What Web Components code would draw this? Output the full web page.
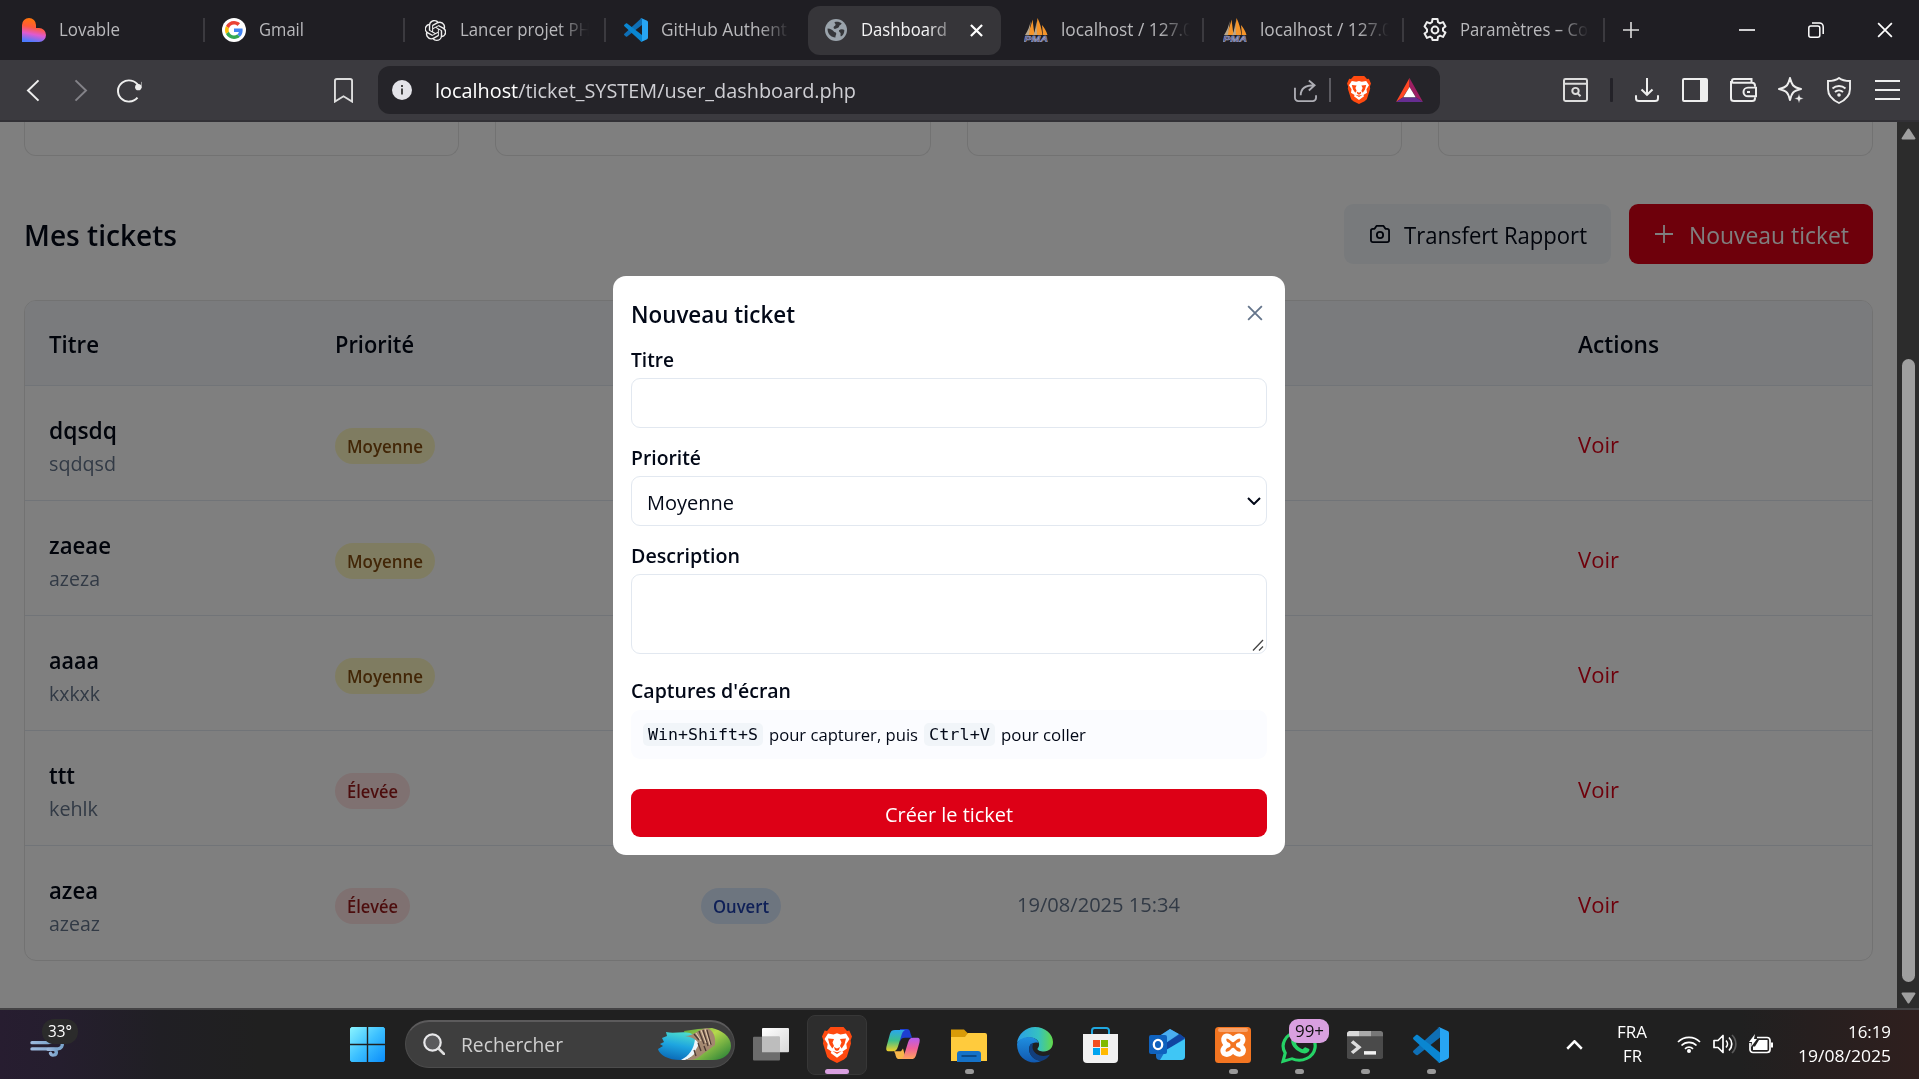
<!DOCTYPE html>
<html lang="fr">
<head>
<meta charset="utf-8">
<title>Dashboard</title>
<style>
html,body{margin:0;height:100%;overflow:hidden;background:#202020}
body{font-family:"Open Sans","Noto Sans",sans-serif}
</style>
</head>
<body>
<desktop-screen></desktop-screen>
<script>
const ICONS = {
lovable:['0 0 24 24','<defs><linearGradient id="g" x1=".6" y1="0" x2=".4" y2="1"><stop offset="0" stop-color="#ff7a00"/><stop offset=".4" stop-color="#ff5a3c"/><stop offset=".68" stop-color="#e05ad0"/><stop offset="1" stop-color="#4a7bff"/></linearGradient></defs><path fill="url(#g)" d="M0 7a7 7 0 0 1 14 0v3h3a7 7 0 0 1 0 14H0z"/>'],
google:['0 0 24 24','<circle cx="12" cy="12" r="12" fill="#fff"/><g transform="translate(3,3) scale(.375)"><path fill="#EA4335" d="M24 9.500c3.540 0 6.710 1.220 9.210 3.600l6.850-6.850C35.900 2.380 30.470 0 24 0 14.620 0 6.510 5.380 2.560 13.220l7.980 6.190C12.430 13.720 17.740 9.500 24 9.500z"/><path fill="#4285F4" d="M46.980 24.550c0-1.570-.150-3.090-.380-4.550H24v9.020h12.940c-.580 2.960-2.260 5.480-4.780 7.180l7.730 6c4.510-4.180 7.090-10.360 7.090-17.650z"/><path fill="#FBBC05" d="M10.530 28.590c-.480-1.450-.760-2.990-.760-4.590s.270-3.140.760-4.590l-7.980-6.190C.920 16.460 0 20.120 0 24c0 3.880.920 7.540 2.560 10.780z"/><path fill="#34A853" d="M24 48c6.480 0 11.930-2.130 15.890-5.810l-7.730-6c-2.150 1.450-4.920 2.300-8.160 2.300-6.260 0-11.570-4.220-13.470-9.910l-7.980 6.190C6.510 42.620 14.620 48 24 48z"/></g>'],
gpt:['0.5 0 23 24','<path fill="#eee" d="M22.2819 9.8211a5.9847 5.9847 0 0 0-.5157-4.9108 6.0462 6.0462 0 0 0-6.5098-2.9A6.0651 6.0651 0 0 0 4.9807 4.1818a5.9847 5.9847 0 0 0-3.9977 2.9 6.0462 6.0462 0 0 0 .7427 7.0966 5.98 5.98 0 0 0 .511 4.9107 6.051 6.051 0 0 0 6.5146 2.9001A5.9847 5.9847 0 0 0 13.2599 24a6.0557 6.0557 0 0 0 5.7718-4.2058 5.9894 5.9894 0 0 0 3.9977-2.9001 6.0557 6.0557 0 0 0-.7475-7.0729zm-9.022 12.6081a4.4755 4.4755 0 0 1-2.8764-1.0408l.1419-.0804 4.7783-2.7582a.7948.7948 0 0 0 .3927-.6813v-6.7369l2.02 1.1686a.071.071 0 0 1 .038.052v5.5826a4.504 4.504 0 0 1-4.4945 4.4944zm-9.6607-4.1254a4.4708 4.4708 0 0 1-.5346-3.0137l.142.0852 4.783 2.7582a.7712.7712 0 0 0 .7806 0l5.8428-3.3685v2.3324a.0804.0804 0 0 1-.0332.0615L9.74 19.9502a4.4992 4.4992 0 0 1-6.1408-1.6464zM2.3408 7.8956a4.485 4.485 0 0 1 2.3655-1.9728V11.6a.7664.7664 0 0 0 .3879.6765l5.8144 3.3543-2.0201 1.1685a.0757.0757 0 0 1-.071 0l-4.8303-2.7865A4.504 4.504 0 0 1 2.3408 7.872zm16.5963 3.8558L13.1038 8.364 15.1192 7.2a.0757.0757 0 0 1 .071 0l4.8303 2.7913a4.4944 4.4944 0 0 1-.6765 8.1042v-5.6772a.79.79 0 0 0-.407-.667zm2.0107-3.0231l-.142-.0852-4.7735-2.7818a.7759.7759 0 0 0-.7854 0L9.409 9.2297V6.8974a.0662.0662 0 0 1 .0284-.0615l4.8303-2.7866a4.4992 4.4992 0 0 1 6.6802 4.66zM8.3065 12.863l-2.02-1.1638a.0804.0804 0 0 1-.038-.0567V6.0742a4.4992 4.4992 0 0 1 7.3757-3.4537l-.142.0805L8.704 5.459a.7948.7948 0 0 0-.3927.6813zm1.0976-2.3654l2.602-1.4998 2.6069 1.4998v2.9994l-2.5974 1.4997-2.6067-1.4997Z"/>'],
vscode:['0 0 36 36','<path fill="#0f6fb5" d="M.6 23.600a1.500 1.500 0 0 0 0 2.200l2.200 2c.6.500 1.400.6 2 .1L27 10.500V0L25.500.7z"/><path fill="#0a86d1" d="M.6 12.400a1.500 1.500 0 0 1 0-2.200l2.200-2c.6-.5 1.400-.6 2-.1L27 25.500V36l-1.500-.7z"/><path fill="#27a5f3" d="M26.500 35.800c-.8.400-1.800.1-2.400-.5.8.8 2.900.2 2.900-.9V1.600c0-1.100-2.100-1.700-2.900-.9.6-.6 1.600-.9 2.400-.5l8.200 3.900c.8.400 1.300 1.200 1.300 2.100v23.600c0 .9-.5 1.700-1.300 2.100z"/>'],
globe:['0 0 22 22','<circle cx="11" cy="11" r="11" fill="#9aa3ab"/><path fill="#35363a" d="M2.600 9.500c3 .2 4.800 1.300 6 2.700 1 1.200 2.200.7 2.600 2 .3 1.300-.8 2-.8 4.200C6.500 18.500 3 15.500 2.600 11zM9.500 3.200C12 2.300 15 3 16.700 4.400c-.5 1.300-2.500 1.400-2.600 3-.1 1.500-2 1.200-3 2.200-1.300 1-2.600.1-2.500-1.300.2-1.500 2-1.300 2-2.600 0-1-1.100-1.300-1.100-2.500zM14 11.200c1.500-1.200 3.800-1.200 5.300-.3.200 3-1.200 5.200-3.400 6.600-.9-1.400.2-2.800-.6-3.800-.6-.8-1.700-1.300-1.300-2.500z"/>'],
pma:['0 0 24 24','<path fill="#f5952a" d="M3 17C6 11 7.500 6 8.500 1.500l2 15.500zM10 17c2-6 3-11 3.500-17 2.500 5 4 10 5 17zM18 7c2.500 3 4.500 6 5.500 10h-4.500z"/><path fill="#b9a78c" d="M1 17C4 13 5.500 8 6.800 3L5 17zM9.500 17c1.500-4 2.500-9 3-14l.5 14z"/><text x="0" y="24" font-family="Liberation Sans" font-size="9.500" font-weight="700" font-style="italic" textLength="24" lengthAdjust="spacingAndGlyphs" fill="#39407f" stroke="#b4b7d3" stroke-width=".5">PMA</text>'],
gear:['0 0 24 24','<g fill="none" stroke="#eee" stroke-width="2" stroke-linejoin="round"><path d="M9.500 1h5l.5 3.200 2 1.200 3-1.300 2.500 4.300-2.500 1.900v2.400l2.500 1.900-2.500 4.300-3-1.300-2 1.200-.5 3.200h-5L9 19.800l-2-1.200-3 1.300-2.500-4.300L4 13.700v-2.400L1.500 8.400 4 4.100l3 1.300 2-1.200z"/><circle cx="12" cy="12" r="3.400"/></g>'],
x:['0 0 14 14','<path d="M1 1l12 12M13 1L1 13" stroke="currentColor" stroke-width="var(--sw,2)" fill="none"/>'],
plus:['0 0 18 18','<path d="M9 0v18M0 9h18" stroke="currentColor" stroke-width="var(--sw,1.8)"/>'],
min:['0 0 16 16','<path d="M0 8h16" stroke="#fff" stroke-width="1.600"/>'],
restore:['0 0 16 16','<g fill="none" stroke="#fff" stroke-width="1.500"><rect x=".8" y="4" width="11" height="11.200" rx="2"/><path d="M4 1h7.500A3.700 3.700 0 0 1 15.200 4.700V12"/></g>'],
back:['0 0 14 24','<path d="M12.500 1.500L2 12l10.500 10.500" fill="none" stroke="currentColor" stroke-width="2"/>'],
reload:['0 0 26 26','<path d="M21.500 20.500A11 11 0 1 1 22.500 8" fill="none" stroke="#eee" stroke-width="2"/><path d="M18.500 10.500h7V4a3.500 3.500 0 0 1 0 6.500z" fill="#eee"/><circle cx="22.300" cy="9.500" r="3.200" fill="#eee"/>'],
bookmark:['0 0 20 26','<path d="M1 3a2 2 0 0 1 2-2h14a2 2 0 0 1 2 2v21.500l-9-5.500-9 5.500z" fill="none" stroke="#ddd" stroke-width="2"/>'],
info:['0 0 20 20','<circle cx="10" cy="10" r="10" fill="#e3e3e8"/><path d="M10 8.500v6M10 5v2" stroke="#333" stroke-width="1.800"/>'],
share:['0 0 24 24','<path d="M1 9v10.500A3.500 3.500 0 0 0 4.500 23h15a3.500 3.500 0 0 0 3.500-3.500V17M7 17C7 10 11 6.500 21 6.500M15.500 1.500l6 5-6 5.500" fill="none" stroke="#aeaeb5" stroke-width="1.900"/>'],
brave:['0 0 30 36','<path fill="#ff4a10" d="M8.500 0h13l3.500 4 2.300-.4L30 9.500l-1.400 4 .4 3-4.200 13.500L22 32.500 15 36l-7-3.500L5.200 30 1 16.500l.4-3L0 9.500l2.700-5.900L5 4z"/><path fill="#fff" d="M6 6.500l5.500 1L15 6.300l3.500 1.200 5.500-1 3.500 5.500-3.200 5 .7 4.500-4.500 3 .8 1.500-6.300 4.800L8.700 26l.8-1.500-4.500-3 .7-4.500-3.200-5z"/><path fill="#ff4a10" d="M6 11.500l6 .6-1.500 3.400L12 19l-1.700 2.500-2.800-4.200zM24 11.500l-6 .6 1.500 3.400L18 19l1.700 2.500 2.800-4.200zM12 20l3 1.500 3-1.500-1 3-2 1-2-1zM10.500 24l4.500 1.200 4.500-1.200-4.500 3z"/>'],
bat:['0 0 26 24','<path fill="#ff4724" d="M13 0v9L6.500 19.500 0 24z"/><path fill="#9e1f63" d="M13 0v9l6.500 10.500L26 24z"/><path fill="#662d91" d="M0 24l6.500-4.500h13L26 24z"/><path fill="#fff" d="M13 9l6 10.300H7z"/>'],
findpage:['0 0 25 25','<g fill="none" stroke="#ddd" stroke-width="2"><rect x="1" y="1" width="23" height="23" rx="1.500"/><path d="M1 6h23M17.500 19l-3-3.200"/><circle cx="12.500" cy="13.500" r="3.200"/></g>'],
download:['0 0 24 25','<path d="M12 0v17M6.500 12l5.500 5.500 5.500-5.500M1 18v3a3 3 0 0 0 3 3h16a3 3 0 0 0 3-3v-3" fill="none" stroke="#eee" stroke-width="2"/>'],
sidebar:['0 0 26 25','<rect x="1" y="1" width="24" height="23" rx="1" fill="none" stroke="#eee" stroke-width="2"/><path d="M18 1h7v23h-7z" fill="#eee"/>'],
wallet:['0 0 27 25','<g fill="none" stroke="#eee" stroke-width="2"><path d="M25 9V8a3 3 0 0 0-3-3H4a2 2 0 0 1 0-4h17.500v4M1 3v18a3 3 0 0 0 3 3h18a3 3 0 0 0 3-3v-1"/><path d="M26 10h-8a4.500 4.500 0 0 0 0 9h8zM17 14.500h3"/></g>'],
sparkle:['0 0 26 26','<path d="M12 1c1.500 5 1.500 9 11 11-9.500 2-9.500 6-11 11-1.500-5-1.500-9-11-11C10.500 10 10.500 6 12 1z" fill="none" stroke="#eee" stroke-width="2" stroke-linejoin="round"/><path d="M21 16.500l1.300 3.700 3.700 1.300-3.700 1.300L21 26.500l-1.300-3.700-3.700-1.300 3.700-1.300z" fill="#eee" stroke="#3b3a3f" stroke-width=".6"/>'],
vpn:['0 0 24 27','<g fill="none" stroke="#eee" stroke-width="1.900"><path d="M12 1c3 2.300 7 3 11 3v8c0 7-4.500 11-11 14C5.500 23 1 19 1 12V4c4 0 8-.7 11-3z"/><path d="M5.500 11.500a9.500 9.500 0 0 1 13 0M8 15a6 6 0 0 1 8 0"/></g><circle cx="12" cy="18" r="1.800" fill="#eee"/>'],
menu:['0 0 25 22','<path d="M0 2h25M0 11h25M0 20h25" stroke="#eee" stroke-width="2"/>'],
camera:['0 0 21 19','<path d="M6.800 1h7.400l2 3H18a2 2 0 0 1 2 2v10a2 2 0 0 1-2 2H3a2 2 0 0 1-2-2V6a2 2 0 0 1 2-2h1.800z" fill="none" stroke="#020817" stroke-width="1.900" stroke-linejoin="round"/><circle cx="10.500" cy="10.500" r="3.300" fill="none" stroke="#020817" stroke-width="1.900"/>'],
chev:['0 0 14 8','<path d="M1 1l6 6 6-6" fill="none" stroke="currentColor" stroke-width="2"/>'],
grip:['0 0 12 12','<path d="M1 11.500L11 1M7 11.500L11 7.500" stroke="#444" stroke-width="1.300"/>'],
tri:['0 0 14 12','<path d="M7 1.500L12.500 10.500h-11z" fill="#9f9f9f" stroke="#9f9f9f" stroke-width="2" stroke-linejoin="round"/>'],
wind:['0 0 36 22','<defs><linearGradient id="w" x2="1"><stop stop-color="#9db8dc"/><stop offset="1" stop-color="#7ba5cc"/></linearGradient></defs><g fill="none" stroke="url(#w)" stroke-width="3.400" stroke-linecap="round"><path d="M2 7h16c4 0 5-4 2-6"/><path d="M2 13.500h26a4.500 4.500 0 1 0-3-8"/><path d="M18 14h5.500a3 3 0 1 1-3 4"/></g>'],
win:['0 0 35 35','<defs><linearGradient id="v" x2="1" y2="1"><stop stop-color="#8af4ff"/><stop offset=".5" stop-color="#3cc0ff"/><stop offset="1" stop-color="#0a8cfa"/></linearGradient></defs><path fill="url(#v)" d="M1.500 0H16.800v16.800H0V1.500zM18.200 0h15.300L35 1.500v15.300H18.200zM0 18.200h16.800V35H1.500L0 33.500zM18.200 18.200H35v15.300L33.500 35H18.200z"/>'],
search:['0 0 22 22','<circle cx="9.500" cy="9.500" r="8.200" fill="#5a5a5c" stroke="#e8e8ea" stroke-width="2.200"/><path d="M15.500 15.500l5.500 5.500" stroke="#ddd" stroke-width="2.600" stroke-linecap="round"/>'],
bay:['0 0 73 34','<defs><linearGradient id="b" x1=".7" y1="0" x2=".4" y2="1"><stop stop-color="#4fe0cc"/><stop offset=".5" stop-color="#1ea5e0"/><stop offset="1" stop-color="#0b6bb8"/></linearGradient><linearGradient id="c" x2="1" y2="1"><stop stop-color="#57a53a"/><stop offset=".4" stop-color="#b6d84c"/><stop offset="1" stop-color="#1c7a35"/></linearGradient></defs><path fill="url(#c)" d="M26 4l14-2 14-1c9 2 19 8 19 18 0 8-8 14-18 14H34z"/><path fill="url(#b)" d="M9 9l-1-4c8 2 16-1 24 1l10 5c-1 9-6 18-17 22C12 34 1 28 0 22l5-3-3-2 4-2-2-4z"/><path fill="#eef6fb" d="M37 12l6 1c-1 9-7 17-16 20h-4c8-4 13-11 14-21z"/><path fill="#a48870" d="M27 9c9 0 13-7 22-8 6 2 9 8 8 17l-8 6c-5 3-9 8-15 9h-6c5-3 10-6 9-9l3-5c1-4-2-8-13-10z"/><path d="M36 7l5 6M41 4l5 13M45 3l5 16M49 3l4 15M40 16l3 8M36 23l2 6M46 19l2 5" stroke="#4d3a33" stroke-width="1.300"/><path d="M38 6l5 8M43 3l5 13M47 2l5 16" stroke="#e5cdb0" stroke-width="1"/>'],
taskview:['0 0 36 34','<defs><linearGradient id="t" x2="1" y2="1"><stop stop-color="#fff"/><stop offset="1" stop-color="#d8d8d8"/></linearGradient></defs><rect x="9" width="27" height="25" rx="1" fill="url(#t)"/><rect y="9" width="27" height="24.500" rx="1" fill="#6c6c6c"/><path fill="#bdbdbd" d="M9 9h18v16H9z"/>'],
copilot:['0 0 34 32','<defs><linearGradient id="p" x2="0" y2="1"><stop stop-color="#2aa7f0"/><stop offset=".5" stop-color="#3ebf8a"/><stop offset="1" stop-color="#f2d027"/></linearGradient><linearGradient id="q" x2="0" y2="1"><stop stop-color="#b55cf0"/><stop offset=".5" stop-color="#f0609a"/><stop offset="1" stop-color="#ffa45c"/></linearGradient></defs><path fill="#1d3fd0" d="M14 0h7c3 0 3 3 4 6l1 3h-7c-3 0-4 1-5 4z"/><path fill="url(#p)" d="M9 1h10c-2 1-3 3-4 7l-3 10c-1 3-2 5-5 5H3c-3 0-3-2-2.500-5L4 5c1-3 2-4 5-4z"/><path fill="#f7b64a" d="M8 23h7l2-3 3 11h-7c-3 0-3-3-4-6z"/><path fill="url(#q)" d="M25 31H15c2-1 3-3 4-7l3-10c1-3 2-5 5-5h4c3 0 3 2 2.500 5L30 27c-1 3-2 4-5 4z"/>'],
folder:['0 0 36 34','<path fill="#d99b08" d="M0 1.500h13l4 4H34V20H0z"/><path fill="#ffcb3d" d="M0 9h14l3-4h17a2 2 0 0 1 2 2v26H0z"/><path fill="#1572c8" d="M6 34V26a3 3 0 0 1 3-3h18a3 3 0 0 1 3 3v8z"/><path d="M10.500 28h15" stroke="#0b4a88" stroke-width="2"/>'],
edge:['0 0 36 36','<defs><linearGradient id="e" x2="1"><stop stop-color="#2a9ee8"/><stop offset=".6" stop-color="#35c1c1"/><stop offset="1" stop-color="#63d94a"/></linearGradient><linearGradient id="f" x2="0" y2="1"><stop stop-color="#1f8fe0"/><stop offset="1" stop-color="#1159b0"/></linearGradient></defs><path fill="url(#e)" d="M0 16C1 7 9 0 18 0c10 0 18 7 18 15 0 6-4 9.500-9 9.500-4 0-6.500-1.500-6.500-2.500s1.600-1.500 1.600-4.500c0-4-4-7-9-7C7 10.500 2 13 0 16z"/><path fill="url(#f)" d="M0 17c1-4 6-7 12-7 5 0 9 3 9.500 6-6-2-11 3-9 9 1.700 5.500 7 9 13 8.500C15 39 0 33 0 17z"/><path fill="#123e7c" d="M13.500 17c-4 7 1 16 10.500 17 3-.5 7-3 9-6.500-4 2-10 2-13.500-.5-4-3-5-7-3-11z"/>'],
store:['0 0 36 36','<path d="M9 8V3.500A2.500 2.500 0 0 1 11.500 1h12A2.500 2.500 0 0 1 26 3.500V8" fill="none" stroke="#20a8e0" stroke-width="2"/><path fill="#f1f1f1" d="M0 7h35v25a4 4 0 0 1-4 4H4a4 4 0 0 1-4-4z"/><path fill="#f25022" d="M10 13h7v7h-7z"/><path fill="#7fba00" d="M18 13h7v7h-7z"/><path fill="#00a4ef" d="M10 21h7v7h-7z"/><path fill="#ffb900" d="M18 21h7v7h-7z"/>'],
outlook:['0 0 36 31','<path fill="#1a6fc4" d="M7 9L21 0l15 9v18a4 4 0 0 1-4 4H11a4 4 0 0 1-4-4z"/><path fill="#4aaef0" d="M9 8l12-8 9 5-16 11z"/><path fill="#1044a0" d="M14 16L31 5l5 4-18 12z"/><path fill="#3fc6f5" d="M17 21l19-11v17a4 4 0 0 1-4 4H11z"/><rect y="6" width="18" height="19" rx="2" fill="#0f62be"/><ellipse cx="9" cy="15.500" rx="4.200" ry="4.700" fill="none" stroke="#fff" stroke-width="2.300"/>'],
xampp:['0 0 36 36','<rect width="36" height="36" rx="3.500" fill="#f37521"/><rect x="3" y="1" width="30" height="4" rx="2" fill="#f9a268"/><g fill="none" stroke="#fff" stroke-width="5" stroke-linecap="round" stroke-linejoin="round"><path d="M9 26.500c-3-4 1.500-8 4-8.500-3-.5-6-5-3-8.500 3-2 6 1 8 3 2-2 6-5 9-2.500 2.500 3.500-.5 7.500-3.500 8 3 .5 6.500 4.500 4 8-3 2.500-7 .5-9.500-2.500-2.500 3-6 5-9 3z"/></g>'],
whatsapp:['0 0 36 43','<path d="M4.200 30.500A16 16 0 1 1 11 37l-9 3z" fill="none" stroke="#25d366" stroke-width="3.200"/><path fill="#25d366" d="M11 14c2-2.500 4-1.500 4.500 0l1.200 3.500c.2 1-1.700 2-1.700 2.700 1.300 3 3.500 5 6.500 6 1-.3 2-2.200 2.800-2.200l4 2c.8 2.500-2 5-4.500 5C17 31 7.500 21 11 14z"/>'],
terminal:['0 0 36 32','<rect width="36" height="32" rx="2" fill="#4a4a4a"/><path fill="#d8d8d8" d="M2 0h10v6H0V2z"/><path fill="#aaa" d="M12 0h12v6H12z"/><path fill="#777" d="M24 0h10l2 2v4H24z"/><path d="M5 12l7 6.500L5 25" fill="none" stroke="#ddd" stroke-width="3.600"/><path d="M17 25h12" stroke="#f2f2f2" stroke-width="4"/>'],
wifi:['0 0 24 18','<g fill="none" stroke="#fff" stroke-width="1.700"><path d="M1 7a15.500 15.500 0 0 1 22 0M4.500 10.500a10.500 10.500 0 0 1 15 0M8 13.800a5.700 5.700 0 0 1 8 0"/></g><circle cx="12" cy="16" r="2" fill="#fff"/>'],
sound:['0 0 24 20','<g fill="none" stroke="#fff" stroke-width="1.700"><path d="M1 6.500h4l5-5v17l-5-5H1z" stroke-linejoin="round"/><path d="M13 6.500a5 5 0 0 1 0 7M16 3.500a9 9 0 0 1 0 13"/><path d="M19 1a12.500 12.500 0 0 1 0 18" stroke="#5a5a5a"/></g>'],
battery:['0 0 24 20','<path d="M8 3.500h10a3 3 0 0 1 3 3v9a3 3 0 0 1-3 3H4a3 3 0 0 1-3-3V9" fill="none" stroke="#fff" stroke-width="1.700"/><path fill="#fff" d="M10 6h8.500v10H4v-3.500h2zM22 8.500h2v5h-2zM6 0L0 8h3l-1 5 6-8H5z"/>']
};

/* Registers an element whose open shadow root holds the given style and markup. */
function define(name, css, html, ready) {
  customElements.define(name, class extends HTMLElement {
    connectedCallback() {
      if (this.shadowRoot) return;
      const root = this.attachShadow({mode: 'open'});
      const a = k => this.getAttribute(k) ?? '';
      root.innerHTML = `<style>:host{display:block;box-sizing:border-box}*{box-sizing:border-box}${css}</style>` +
        (typeof html === 'function' ? html(a) : html);
      ready && ready(this, root);
    }
  });
}

/* One line of text condensed or widened to an exact advance width. */
define('fit-text',
  `:host{white-space:pre;flex:none;line-height:1.4}span{display:inline-block;transform-origin:0 50%}`,
  '<span><slot></slot></span>',
  (el, root) => {
    const s = root.querySelector('span'), w = +el.getAttribute('w');
    s.style.transform = `scaleX(${w / s.getBoundingClientRect().width})`;
    el.style.width = w + 'px';
  });

define('x-icon', `:host{flex:none;line-height:0}svg{display:block}`,
  a => `<svg width="${a('w')}" height="${a('h')}" viewBox="${ICONS[a('name')][0]}" preserveAspectRatio="none">${ICONS[a('name')][1]}</svg>`);

/* ---------- browser chrome ---------- */
define('browser-tab', `
 :host{width:200.200px;height:60px;display:flex;align-items:center;padding-left:20px;font-size:18px;color:#b9b9bc;flex:none}
 .ic{width:24px;display:flex;justify-content:center;margin-right:13px}
 .t{width:134px;margin-top:-1px;margin-right:-20px}
 :host([fade]) .t{-webkit-mask-image:linear-gradient(90deg,#000 98px,transparent 129px);mask-image:linear-gradient(90deg,#000 98px,transparent 129px)}
 .sep{width:2px;height:24px;background:#3b3a3f;margin-left:auto;margin-right:var(--shift,0)}
 :host([nosep]) .sep{display:none}
 :host([active]) .box{background:#363539;border-radius:12px}
 .box{display:flex;align-items:center;flex:1;height:49px;min-width:0}
 :host([active]){padding:0 3px 0 4px;color:#f4f4f5}
 :host([active]) .box{padding-left:16px}
 :host([active]) .t{width:87px;margin-right:0;-webkit-mask-image:linear-gradient(90deg,#000 76%,#0006);mask-image:linear-gradient(90deg,#000 76%,#0006)}
 .close{display:none;color:#fff;--sw:2.400;margin-left:22px}
 :host([active]) .close{display:block}
`, a => `<div class="box"><div class="ic"><x-icon name="${a('icon')}" w="${a('iw')||24}" h="${a('iw')||24}"></x-icon></div>
 <div class="t"><fit-text w="${a('w')}">${a('label')}</fit-text></div><x-icon class="close" name="x" w="13" h="13"></x-icon></div><div class="sep"></div>`);

define('tab-strip', `
 :host{display:flex;align-items:center;height:60px;background:#1f1e23;padding-left:3px;color:#ededed}
 browser-tab:nth-child(-n+4 of browser-tab){--shift:-2px}
 .l{padding-left:19px}
 .plus{margin-left:18px;color:#ddd}
 .win{margin-left:auto;display:flex;gap:53px;padding-right:26px;--sw:1.500;color:#fff}
`, `
 <browser-tab class="l" icon="lovable" label="Lovable" w="61"></browser-tab>
 <browser-tab class="l" icon="google" label="Gmail" w="45"></browser-tab>
 <browser-tab icon="gpt" iw="21" label="Lancer projet PH" w="131" fade></browser-tab>
 <browser-tab icon="vscode" label="GitHub Authent" w="126" fade nosep></browser-tab>
 <browser-tab icon="globe" iw="22" label="Dashboard" w="86" active nosep></browser-tab>
 <browser-tab icon="pma" label="localhost / 127.0" w="132" fade></browser-tab>
 <browser-tab class="l" icon="pma" label="localhost / 127.0" w="132" fade></browser-tab>
 <browser-tab class="l" icon="gear" label="Paramètres – Co" w="128" fade></browser-tab>
 <x-icon class="plus" name="plus" w="16" h="16"></x-icon>
 <div class="win"><x-icon name="min" w="16" h="16"></x-icon><x-icon name="restore" w="16" h="16"></x-icon><x-icon name="x" w="16" h="16"></x-icon></div>`);

define('nav-bar', `
 :host{display:flex;align-items:center;height:62px;background:#3b3a3f;border-bottom:2px solid #323136;padding:0 8px 0 9px;color:#eee}
 .s{width:48px;display:flex;justify-content:center;flex:none}
 .dim{color:#838288}.dim x-icon{transform:scaleX(-1)}
 .url{display:flex;align-items:center;width:1062px;height:48px;border-radius:12px;background:#252429;margin-left:11px;padding:0 17px 0 14px;font-size:20px;color:#cfcfd4}
 .url fit-text{margin-left:23px;margin-top:1px}b{font-weight:400;color:#fff}
 .v{width:2px;height:24px;background:#5c5b61;margin:0 16px 0 12px}
 .right{display:flex;align-items:center;margin-left:auto}
 .d{width:3px;height:24px;background:#232228;margin:0 10px 0 11px;border-radius:1px}
`, `
 <div class="s"><x-icon name="back" w="14" h="23"></x-icon></div><div class="s dim"><x-icon name="back" w="14" h="23"></x-icon></div>
 <div class="s"><x-icon name="reload" w="26" h="25"></x-icon></div>
 <div class="s" style="margin-left:166px"><x-icon name="bookmark" w="19" h="25"></x-icon></div>
 <div class="url"><x-icon name="info" w="20" h="20"></x-icon><fit-text w="421"><b>localhost</b>/ticket_SYSTEM/user_dashboard.php</fit-text>
 <x-icon name="share" w="23" h="23" style="margin-left:auto"></x-icon><div class="v"></div><x-icon name="brave" w="24" h="28"></x-icon><x-icon name="bat" w="27" h="24" style="margin-left:25px"></x-icon></div>
 <div class="right"><div class="s"><x-icon name="findpage" w="25" h="24"></x-icon></div><div class="d"></div>
 ${[['download',24,24],['sidebar',26,24],['wallet',27,24],['sparkle',26,26],['vpn',24,27],['menu',25,22]].map(i=>`<div class="s"><x-icon name="${i[0]}" w="${i[1]}" h="${i[2]}"></x-icon></div>`).join('')}</div>`);

/* ---------- dashboard page ---------- */
define('status-pill', `
 :host{display:inline-flex;align-items:center;height:36px;padding:1px 12px 0;border-radius:18px;font-size:17.500px;font-weight:600}
 :host([tone=yellow]){background:#fef9c3;color:#854d0e}
 :host([tone=red]){background:#ffe2e2;color:#991b1b}
 :host([tone=blue]){background:#dbeafe;color:#1e40af}
`, '<slot></slot>');

define('ticket-row', `
 :host{display:grid;grid-template-columns:286px 366px 316px 561px 1fr;align-items:center;height:115px;padding-left:24px;border-bottom:1px solid #e2e8f0;font-size:22.500px;color:#020817}
 :host([last]){height:114px;border:0}
 .n{padding-top:7px}.n fit-text{line-height:33px}
 .name{font-weight:600}.sub{font-size:20px;color:#64748b}
 .p{padding-top:6px;line-height:0;display:flex}.date{font-size:20px;color:#64748b;padding-top:4px}
 .v{color:#dd0016;padding-top:3px}
`, a => {
  const hi = a('prio') === 'Élevée';
  return `<div class="n"><fit-text class="name" w="${a('nw')}">${a('name')}</fit-text><fit-text class="sub" w="${a('sw')}">${a('sub')}</fit-text></div>
  <div class="p"><status-pill tone="${hi?'red':'yellow'}"><fit-text w="${hi?51:76}">${a('prio')}</fit-text></status-pill></div>
  <div class="p">${a('status')?`<status-pill tone="blue"><fit-text w="56">${a('status')}</fit-text></status-pill>`:''}</div>
  <div class="date">${a('date')?`<fit-text w="163">${a('date')}</fit-text>`:''}</div>
  <div class="v"><fit-text w="41">Voir</fit-text></div>`; });

define('ticket-table', `
 :host{border:1px solid #e5e5e5;border-radius:12px;overflow:hidden;background:#fff}
 .h{display:grid;grid-template-columns:286px 366px 316px 561px 1fr;align-items:center;height:85px;padding-left:24px;background:#f4f7fb;border-bottom:1px solid #e2e8f0;font-size:22.500px;font-weight:600;color:#020817}
 .h fit-text{padding-top:4px}
`, `<div class="h"><fit-text w="50">Titre</fit-text><fit-text w="79">Priorité</fit-text><span></span><span></span><fit-text w="81">Actions</fit-text></div><slot></slot>`);

define('action-button', `
 :host{display:flex;align-items:center;height:60px;border-radius:9px;padding:0 24px 0 26px;font-size:24px;background:#f1f5f9;color:#020817}
 :host([primary]){background:#dd0016;color:#fff}
`, `<slot name="icon"></slot><slot></slot>`);

define('stat-card', `:host{height:34px;flex:1;border:1px solid #e5e5e5;border-top:0;border-radius:0 0 12px 12px}`, '');

define('form-field', `
 :host{display:flex;flex-direction:column;font-size:20.500px;font-weight:600;color:#020817}
 .l{height:28px;margin-bottom:5px}.l fit-text{line-height:28px}
 .b{height:50px;border:1px solid #e2e8f0;border-radius:9px;display:flex;align-items:center;justify-content:space-between;padding:0 5px 0 15px;font-weight:400}
 :host([area]) .b{height:80px;align-items:flex-end;justify-content:flex-end;padding:0 2px 2px}
`, a => `<div class="l"><fit-text w="${a('w')}">${a('label')}</fit-text></div><div class="b"><slot></slot></div>`);

define('ticket-dialog', `
 :host{width:672px;height:579px;border-radius:13px;background:#fff;padding:18px;color:#020817;display:flex;flex-direction:column}
 .top{display:flex;justify-content:space-between;align-items:center;height:39px;font-size:24px;font-weight:600;padding-right:4px}
 .top x-icon{color:#64748b;--sw:1.600;margin-top:-2px}
 .f{margin-top:15px}
 .cap{font-size:20.500px;font-weight:600;margin-top:22px;height:28px}.cap fit-text{line-height:28px}
 .hint{height:49px;background:#fbfcff;border-radius:9px;margin-top:6px;display:flex;align-items:center;padding-left:12px;font-size:17px}
 kbd{font:16.500px "DejaVu Sans Mono",monospace;background:#f1f5f9;border-radius:5px;padding:0 5px;height:23px;display:flex;align-items:center;margin:0 6px 0 0}
 kbd+fit-text+kbd{margin-left:6px}
 .go{height:48px;background:#dd0016;border-radius:9px;color:#fff;display:flex;align-items:center;justify-content:center;font-size:20.500px;font-weight:500;margin-top:30px}
 .go fit-text{padding-top:3px}
`, `
 <div class="top"><fit-text w="164">Nouveau ticket</fit-text><x-icon name="x" w="16" h="16"></x-icon></div>
 <form-field style="margin-top:12px" label="Titre" w="43"></form-field>
 <form-field class="f" label="Priorité" w="70"><fit-text w="87" style="padding-top:2px">Moyenne</fit-text><x-icon name="chev" w="14" h="8"></x-icon></form-field>
 <form-field class="f" area label="Description" w="109"><x-icon name="grip" w="12" h="12"></x-icon></form-field>
 <div class="cap"><fit-text w="160">Captures d'écran</fit-text></div>
 <div class="hint"><kbd><fit-text w="110">Win+Shift+S</fit-text></kbd><fit-text w="149">pour capturer, puis</fit-text><kbd><fit-text w="61">Ctrl+V</fit-text></kbd><fit-text w="85">pour coller</fit-text></div>
 <div class="go"><fit-text w="128">Créer le ticket</fit-text></div>`);

define('page-scrollbar', `
 :host{width:22px;background:#2c2c2c;display:flex;flex-direction:column;align-items:center;padding:6px 0 4px}
 .th{width:13px;height:623px;border-radius:7px;background:#9f9f9f;margin-top:219px}
 .dn{margin-top:auto;transform:scaleY(-1)}
`, `<x-icon name="tri" w="15" h="12"></x-icon><div class="th"></div><x-icon class="dn" name="tri" w="15" h="12"></x-icon>`);

define('dashboard-page', `
 :host{display:flex;height:886px;background:#fff}
 .main{flex:1;position:relative;padding:0 24px}
 .stats{display:flex;gap:36px}
 .head{display:flex;align-items:center;margin:48px 0 36px;gap:18px;height:60px;font-size:29px;font-weight:600;color:#020817}
 .head>fit-text{margin-right:auto;padding-top:2px}
 action-button{font-weight:400}action-button fit-text{padding-top:2px}
 .veil{position:absolute;inset:0;background:rgba(0,0,0,.5);display:flex;align-items:center;justify-content:center;padding-top:1px}
`, `<div class="main"><div class="stats"><stat-card></stat-card><stat-card></stat-card><stat-card></stat-card><stat-card></stat-card></div>
 <div class="head"><fit-text w="153">Mes tickets</fit-text>
 <action-button><x-icon slot="icon" name="camera" w="20" h="18"></x-icon><fit-text w="183" style="margin-left:14px">Transfert Rapport</fit-text></action-button>
 <action-button primary><x-icon slot="icon" name="plus" w="18" h="18"></x-icon><fit-text w="160" style="margin-left:16px">Nouveau ticket</fit-text></action-button></div>
 <ticket-table>
 <ticket-row name="dqsdq" nw="68" sub="sqdqsd" sw="67" prio="Moyenne"></ticket-row>
 <ticket-row name="zaeae" nw="62" sub="azeza" sw="51" prio="Moyenne"></ticket-row>
 <ticket-row name="aaaa" nw="50" sub="kxkxk" sw="51" prio="Moyenne"></ticket-row>
 <ticket-row name="ttt" nw="26" sub="kehlk" sw="49" prio="Élevée"></ticket-row>
 <ticket-row name="azea" nw="49" sub="azeaz" sw="51" prio="Élevée" status="Ouvert" date="19/08/2025 15:34" last></ticket-row>
 </ticket-table>
 <div class="veil"><ticket-dialog></ticket-dialog></div></div><page-scrollbar></page-scrollbar>`);

/* ---------- taskbar ---------- */
define('task-item', `
 :host{width:66px;height:60px;display:flex;align-items:center;justify-content:center;position:relative;flex:none}
 :host([active]) .bg{position:absolute;inset:0 3px;border-radius:8px;background:#2d2d2d;border:1px solid #373737}
 x-icon{position:relative}
 .dot{position:absolute;bottom:1px;height:5px;width:9px;left:28.500px;border-radius:3px;background:#999;display:none}
 :host([run]) .dot{display:block}
 :host([active]) .dot{width:24px;left:21px;background:#d9a0e0}
 .badge{position:absolute;left:23px;top:4px;width:40px;height:24px;border-radius:9px;background:#d9a0e0;color:#111;font-size:17px;display:flex;align-items:center;justify-content:center}
`, a => `<div class="bg"></div><x-icon name="${a('icon')}" w="${a('w')}" h="${a('h')}"></x-icon><div class="dot"></div>${a('badge')?`<div class="badge"><fit-text w="29">${a('badge')}</fit-text></div>`:''}`);

define('task-bar', `
 :host{height:71px;border-top:2px solid #444345;background:linear-gradient(90deg,#271d30 0,#251e2e 60px,#201f24 160px,#202020 260px,#202020 1740px,#261f1f 1810px,#2f1f1e 1919px);display:flex;align-items:center;padding:0 28px 0 29px;color:#fff;font-size:17px}
 .wx{width:50px;height:42px;position:relative;margin-top:-10px;display:flex;align-items:flex-end;padding:0 0 4px 1px}
 .deg{position:absolute;left:13px;top:0;width:36px;height:25px;border-radius:12px;background:#2b2b2b;display:flex;justify-content:center;align-items:center}
 .mid{display:flex;align-items:center;margin-left:271px}
 .se{width:330px;height:48px;border-radius:24px;background:#3e3e3e;border:1px solid #4c4c4c;border-top:2px solid #5c5b5c;display:flex;align-items:center;padding:0 3px 0 17px;margin:-2px 3px 0 20px;font-size:20.500px;color:#cfcfcf}
 .se fit-text{margin-left:16px}
 .tray{display:flex;align-items:center;margin-left:auto}
 .c{display:flex;flex-direction:column;align-items:center}.c fit-text{line-height:24px}
`, `
 <div class="wx"><x-icon name="wind" w="36" h="21"></x-icon><div class="deg"><fit-text w="24">33°</fit-text></div></div>
 <div class="mid"><x-icon name="win" w="35" h="35"></x-icon>
 <div class="se"><x-icon name="search" w="22" h="22"></x-icon><fit-text w="102">Rechercher</fit-text><x-icon name="bay" w="73" h="34" style="margin-left:auto"></x-icon></div>
 <task-item icon="taskview" w="36" h="33"></task-item><task-item icon="brave" w="30" h="36" run active></task-item>
 <task-item icon="copilot" w="34" h="31"></task-item><task-item icon="folder" w="36" h="34" run></task-item>
 <task-item icon="edge" w="36" h="36"></task-item><task-item icon="store" w="36" h="36"></task-item>
 <task-item icon="outlook" w="36" h="31"></task-item><task-item icon="xampp" w="36" h="36" run></task-item>
 <task-item icon="whatsapp" w="36" h="38" run badge="99+"></task-item><task-item icon="terminal" w="36" h="28" run></task-item>
 <task-item icon="vscode" w="36" h="36" run></task-item></div>
 <div class="tray"><x-icon name="chev" w="17" h="10" style="transform:scaleY(-1)"></x-icon>
 <div class="c" style="margin:-1px 30px 0 34px"><fit-text w="30">FRA</fit-text><fit-text w="19">FR</fit-text></div>
 <x-icon name="wifi" w="24" h="18" style="margin-top:-2px"></x-icon><x-icon name="sound" w="24" h="20" style="margin:-1px 0 0 12px"></x-icon><x-icon name="battery" w="24" h="20" style="margin:-2px 0 0 12px"></x-icon>
 <div class="c" style="align-items:flex-end;margin-left:25px;margin-top:-2px"><fit-text w="43">16:19</fit-text><fit-text w="93">19/08/2025</fit-text></div></div>`);

define('desktop-screen', `:host{width:1919px;height:1079px;display:flex;flex-direction:column;overflow:hidden}`,
 `<tab-strip></tab-strip><nav-bar></nav-bar><dashboard-page></dashboard-page><task-bar></task-bar>`);
</script>
</body>
</html>
